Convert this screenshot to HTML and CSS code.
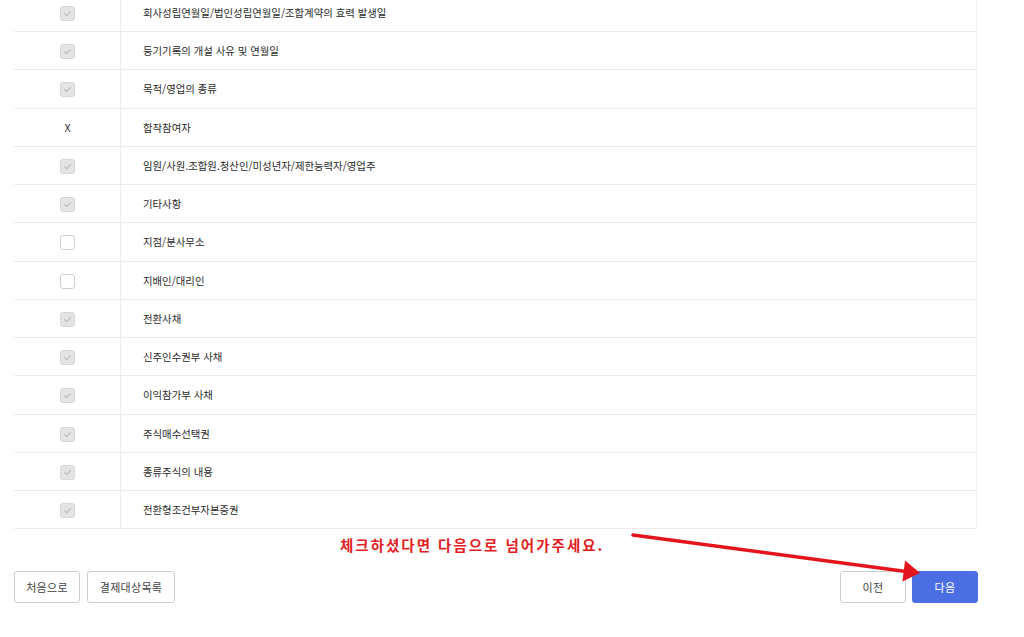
FILE: index.html
```html
<!DOCTYPE html>
<html lang="ko">
<head>
<meta charset="utf-8">
<title>등기사항 선택</title>
<link rel="stylesheet" href="styles.css">
</head>
<body>
<div class="page">
  <div class="table-wrap">
    <table class="items">
      <tbody>
        <tr><td class="c-check"><span class="cb cb-on"><svg viewBox="0 0 15 15"><path d="M4.6 7.6 L6.7 9.6 L10.4 5.6"/></svg></span></td><td class="c-name">회사성립연월일/법인성립연월일/조합계약의 효력 발생일</td></tr>
        <tr><td class="c-check"><span class="cb cb-on"><svg viewBox="0 0 15 15"><path d="M4.6 7.6 L6.7 9.6 L10.4 5.6"/></svg></span></td><td class="c-name">등기기록의 개설 사유 및 연월일</td></tr>
        <tr><td class="c-check"><span class="cb cb-on"><svg viewBox="0 0 15 15"><path d="M4.6 7.6 L6.7 9.6 L10.4 5.6"/></svg></span></td><td class="c-name">목적/영업의 종류</td></tr>
        <tr><td class="c-check"><span class="mark-x">X</span></td><td class="c-name">합작참여자</td></tr>
        <tr><td class="c-check"><span class="cb cb-on"><svg viewBox="0 0 15 15"><path d="M4.6 7.6 L6.7 9.6 L10.4 5.6"/></svg></span></td><td class="c-name">임원/사원.조합원.청산인/미성년자/제한능력자/영업주</td></tr>
        <tr><td class="c-check"><span class="cb cb-on"><svg viewBox="0 0 15 15"><path d="M4.6 7.6 L6.7 9.6 L10.4 5.6"/></svg></span></td><td class="c-name">기타사항</td></tr>
        <tr><td class="c-check"><span class="cb"></span></td><td class="c-name">지점/분사무소</td></tr>
        <tr><td class="c-check"><span class="cb"></span></td><td class="c-name">지배인/대리인</td></tr>
        <tr><td class="c-check"><span class="cb cb-on"><svg viewBox="0 0 15 15"><path d="M4.6 7.6 L6.7 9.6 L10.4 5.6"/></svg></span></td><td class="c-name">전환사채</td></tr>
        <tr><td class="c-check"><span class="cb cb-on"><svg viewBox="0 0 15 15"><path d="M4.6 7.6 L6.7 9.6 L10.4 5.6"/></svg></span></td><td class="c-name">신주인수권부 사채</td></tr>
        <tr><td class="c-check"><span class="cb cb-on"><svg viewBox="0 0 15 15"><path d="M4.6 7.6 L6.7 9.6 L10.4 5.6"/></svg></span></td><td class="c-name">이익참가부 사채</td></tr>
        <tr><td class="c-check"><span class="cb cb-on"><svg viewBox="0 0 15 15"><path d="M4.6 7.6 L6.7 9.6 L10.4 5.6"/></svg></span></td><td class="c-name">주식매수선택권</td></tr>
        <tr><td class="c-check"><span class="cb cb-on"><svg viewBox="0 0 15 15"><path d="M4.6 7.6 L6.7 9.6 L10.4 5.6"/></svg></span></td><td class="c-name">종류주식의 내용</td></tr>
        <tr><td class="c-check"><span class="cb cb-on"><svg viewBox="0 0 15 15"><path d="M4.6 7.6 L6.7 9.6 L10.4 5.6"/></svg></span></td><td class="c-name">전환형조건부자본증권</td></tr>
      </tbody>
    </table>
  </div>
  <p class="notice">체크하셨다면 다음으로 넘어가주세요.</p>
  <div class="actions">
    <div class="group">
      <button class="btn btn-first" type="button">처음으로</button>
      <button class="btn btn-list" type="button">결제대상목록</button>
    </div>
    <div class="group group-right">
      <button class="btn btn-prev" type="button">이전</button>
      <button class="btn btn-next" type="button">다음</button>
    </div>
  </div>
  <svg class="annot-arrow" viewBox="0 0 1024 637" width="1024" height="637">
    <line x1="633" y1="541" x2="906" y2="577.5"/>
    <polygon points="920,579 905.1,566.6 902.4,587.4"/>
  </svg>
</div>
</body>
</html>
```

FILE: styles.css
```css
* { box-sizing: border-box; }

html, body {
  margin: 0;
  padding: 0;
  background: #ffffff;
}

body {
  font-family: "Noto Sans CJK KR", "Noto Sans", sans-serif;
  color: #333333;
  overflow: hidden;
}

.page {
  position: relative;
  width: 1024px;
  height: 637px;
  padding-left: 14px;
}

.table-wrap {
  width: 963px;
  margin-top: -6.2px;
  border-right: 1px solid #efefef;
}

.items {
  width: 100%;
  border-collapse: separate;
  border-spacing: 0;
  table-layout: fixed;
}

.items td {
  height: 38.25px;
  padding: 0;
  border-bottom: 1px solid #ececec;
  font-size: 10.4px;
  vertical-align: middle;
}

.items .c-check {
  width: 107px;
  text-align: center;
  border-right: 1px solid #ececec;
  padding-left: 1px;
}

.items .c-name {
  padding-left: 22px;
  color: #2b2b2b;
}

.cb {
  display: inline-block;
  width: 15px;
  height: 15px;
  border: 1px solid #cfcfcf;
  border-radius: 3px;
  background: #ffffff;
  vertical-align: middle;
  position: relative;
}

.cb svg {
  position: absolute;
  left: -1px;
  top: -1px;
  width: 15px;
  height: 15px;
}

.cb svg path {
  fill: none;
  stroke: #b9b9b9;
  stroke-width: 1.2;
  stroke-linecap: round;
  stroke-linejoin: round;
}

.cb-on {
  background: #e4e4e4;
  border-color: #d6d6d6;
}

.mark-x {
  font-size: 10.8px;
  color: #333333;
}

.notice {
  margin: 7px 0 0 0;
  padding-left: 326px;
  height: 18px;
  line-height: 18px;
  font-size: 14.5px;
  font-weight: 700;
  letter-spacing: 2px;
  color: #e2201f;
}

.actions {
  margin-top: 17px;
  width: 964px;
  display: flex;
  justify-content: space-between;
}

.group {
  display: flex;
  gap: 7px;
}

.group-right {
  gap: 6px;
}

.btn {
  height: 32px;
  padding: 0;
  border: 1px solid #cdcdcd;
  border-radius: 3px;
  background: #ffffff;
  font-family: "Noto Sans CJK KR", "Noto Sans", sans-serif;
  font-size: 11px;
  letter-spacing: 0.3px;
  color: #444444;
  cursor: pointer;
}

.btn-first,
.btn-prev,
.btn-next {
  width: 66px;
}

.btn-list {
  width: 88px;
}

.btn-next {
  background: #4b6fe2;
  border-color: #4b6fe2;
  color: #ffffff;
}

.annot-arrow {
  position: absolute;
  left: 0;
  top: 0;
  pointer-events: none;
}

.annot-arrow line {
  stroke: #e3141b;
  stroke-width: 3.5;
  stroke-linecap: round;
}

.annot-arrow polygon {
  fill: #e3141b;
}
```
